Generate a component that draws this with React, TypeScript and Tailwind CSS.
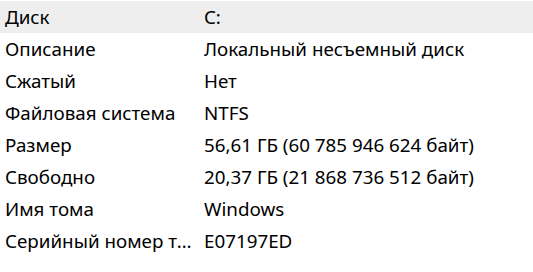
import React from 'react';

const rows: [string, string][] = [
  ['Диск', 'C:'],
  ['Описание', 'Локальный несъемный диск'],
  ['Сжатый', 'Нет'],
  ['Файловая система', 'NTFS'],
  ['Размер', '56,61 ГБ (60 785 946 624 байт)'],
  ['Свободно', '20,37 ГБ (21 868 736 512 байт)'],
  ['Имя тома', 'Windows'],
  ['Серийный номер тома', 'E07197ED'],
];

const App: React.FC = () => {
  return (
    <div className="w-[533px] h-[272px] bg-white pt-px text-[18.8px] text-black font-['Noto_Sans',sans-serif] overflow-hidden">
      {rows.map(([label, value], i) => (
        <div key={label} className={`flex items-center h-8 ${i === 0 ? 'bg-[#eeeeee]' : ''}`}>
          <div className="w-[204px] pl-[5px] pr-[10px] truncate">{label}</div>
          <div className="flex-1 truncate">{value}</div>
        </div>
      ))}
    </div>
  );
};

export default App;
